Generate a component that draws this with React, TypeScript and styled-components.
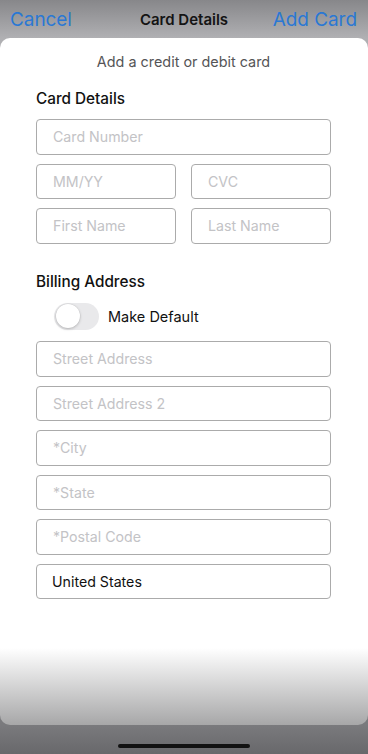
import styled, { createGlobalStyle } from 'styled-components'

const GlobalStyle = createGlobalStyle`
  html, body {
    margin: 0;
    padding: 0;
    height: 100%;
  }

  body {
    font-family: Inter, 'Noto Sans', sans-serif;
    background: linear-gradient(
      to bottom,
      #87878a 0,
      #b0b0b3 38px,
      #7a7a7d 725px,
      #68686b 100%
    );
  }

  #root {
    height: 100%;
  }
`

const Screen = styled.div`
  display: flex;
  flex-direction: column;
  height: 754px;
  overflow: hidden;
`

const NavBar = styled.header`
  display: flex;
  align-items: center;
  justify-content: space-between;
  height: 38px;
  padding: 0 11px 0 10px;
  box-sizing: border-box;
  position: relative;
`

const NavButton = styled.button`
  border: 0;
  background: none;
  padding: 0;
  font-family: inherit;
  font-size: 18.9px;
  color: #2a78d4;
`

const NavTitle = styled.h1`
  position: absolute;
  left: 0;
  right: 0;
  margin: 0;
  text-align: center;
  font-size: 15px;
  font-weight: 600;
  color: #141414;
  pointer-events: none;
`

const Sheet = styled.main`
  height: 687px;
  border-radius: 10px;
  box-sizing: border-box;
  padding: 14px 37px 0 36px;
  background: linear-gradient(
    to bottom,
    #ffffff 0,
    #ffffff calc(100% - 77px),
    #a7a7a8 100%
  );
`

const Subtitle = styled.p`
  margin: 0;
  text-align: center;
  font-size: 14.4px;
  line-height: 20px;
  color: #555557;
`

const SectionTitle = styled.h2<{ $gap: number }>`
  margin: ${(p) => p.$gap}px 0 10px;
  font-size: 15.3px;
  line-height: 20px;
  font-weight: 500;
  color: #111;
`

const Fields = styled.div`
  display: flex;
  flex-direction: column;
  gap: 9px;
`

const FieldRow = styled.div`
  display: grid;
  grid-template-columns: 1fr 1fr;
  gap: 15px;
`

const Field = styled.input<{ $filled?: boolean }>`
  display: block;
  width: 100%;
  height: 35.5px;
  box-sizing: border-box;
  border: 1px solid #ababab;
  border-radius: 4px;
  padding: 0 0 0 ${(p) => (p.$filled ? 15 : 16)}px;
  font-family: inherit;
  font-size: 14.2px;
  color: #111;
  background: #fff;
  outline: none;

  &::placeholder {
    color: #c3c3c6;
  }
`

const ToggleRow = styled.label`
  display: flex;
  align-items: center;
  gap: 9px;
  margin: 0 0 11.5px 18px;
  padding-top: 1px;
  font-size: 14.5px;
  color: #111;
`

const Track = styled.span<{ $on: boolean }>`
  position: relative;
  width: 45px;
  height: 27px;
  border-radius: 14px;
  background: ${(p) => (p.$on ? '#34c759' : '#e9e9eb')};
  flex-shrink: 0;
`

const Knob = styled.span<{ $on: boolean }>`
  position: absolute;
  top: 1.5px;
  left: ${(p) => (p.$on ? '19.5px' : '1.5px')};
  width: 24px;
  height: 24px;
  border-radius: 50%;
  background: #fff;
  box-shadow: 0 1px 3px rgba(0, 0, 0, 0.22), 0 0 0 0.5px rgba(0, 0, 0, 0.06);
`

const HomeArea = styled.div`
  flex: 1;
  display: flex;
  align-items: flex-end;
  justify-content: center;
  padding-bottom: 6px;
`

const HomeIndicator = styled.span`
  width: 132px;
  height: 4.5px;
  border-radius: 3px;
  background: #121212;
`

export default function App() {
  return (
    <>
      <GlobalStyle />
      <Screen>
        <NavBar>
          <NavButton>Cancel</NavButton>
          <NavTitle>Card Details</NavTitle>
          <NavButton>Add Card</NavButton>
        </NavBar>

        <Sheet>
          <Subtitle>Add a credit or debit card</Subtitle>

          <SectionTitle $gap={17}>Card Details</SectionTitle>
          <Fields>
            <Field placeholder="Card Number" />
            <FieldRow>
              <Field placeholder="MM/YY" />
              <Field placeholder="CVC" />
            </FieldRow>
            <FieldRow>
              <Field placeholder="First Name" />
              <Field placeholder="Last Name" />
            </FieldRow>
          </Fields>

          <SectionTitle $gap={28}>Billing Address</SectionTitle>
          <ToggleRow>
            <Track $on={false}>
              <Knob $on={false} />
            </Track>
            Make Default
          </ToggleRow>
          <Fields>
            <Field placeholder="Street Address" />
            <Field placeholder="Street Address 2" />
            <Field placeholder="*City" />
            <Field placeholder="*State" />
            <Field placeholder="*Postal Code" />
            <Field $filled defaultValue="United States" />
          </Fields>
        </Sheet>

        <HomeArea>
          <HomeIndicator />
        </HomeArea>
      </Screen>
    </>
  )
}
